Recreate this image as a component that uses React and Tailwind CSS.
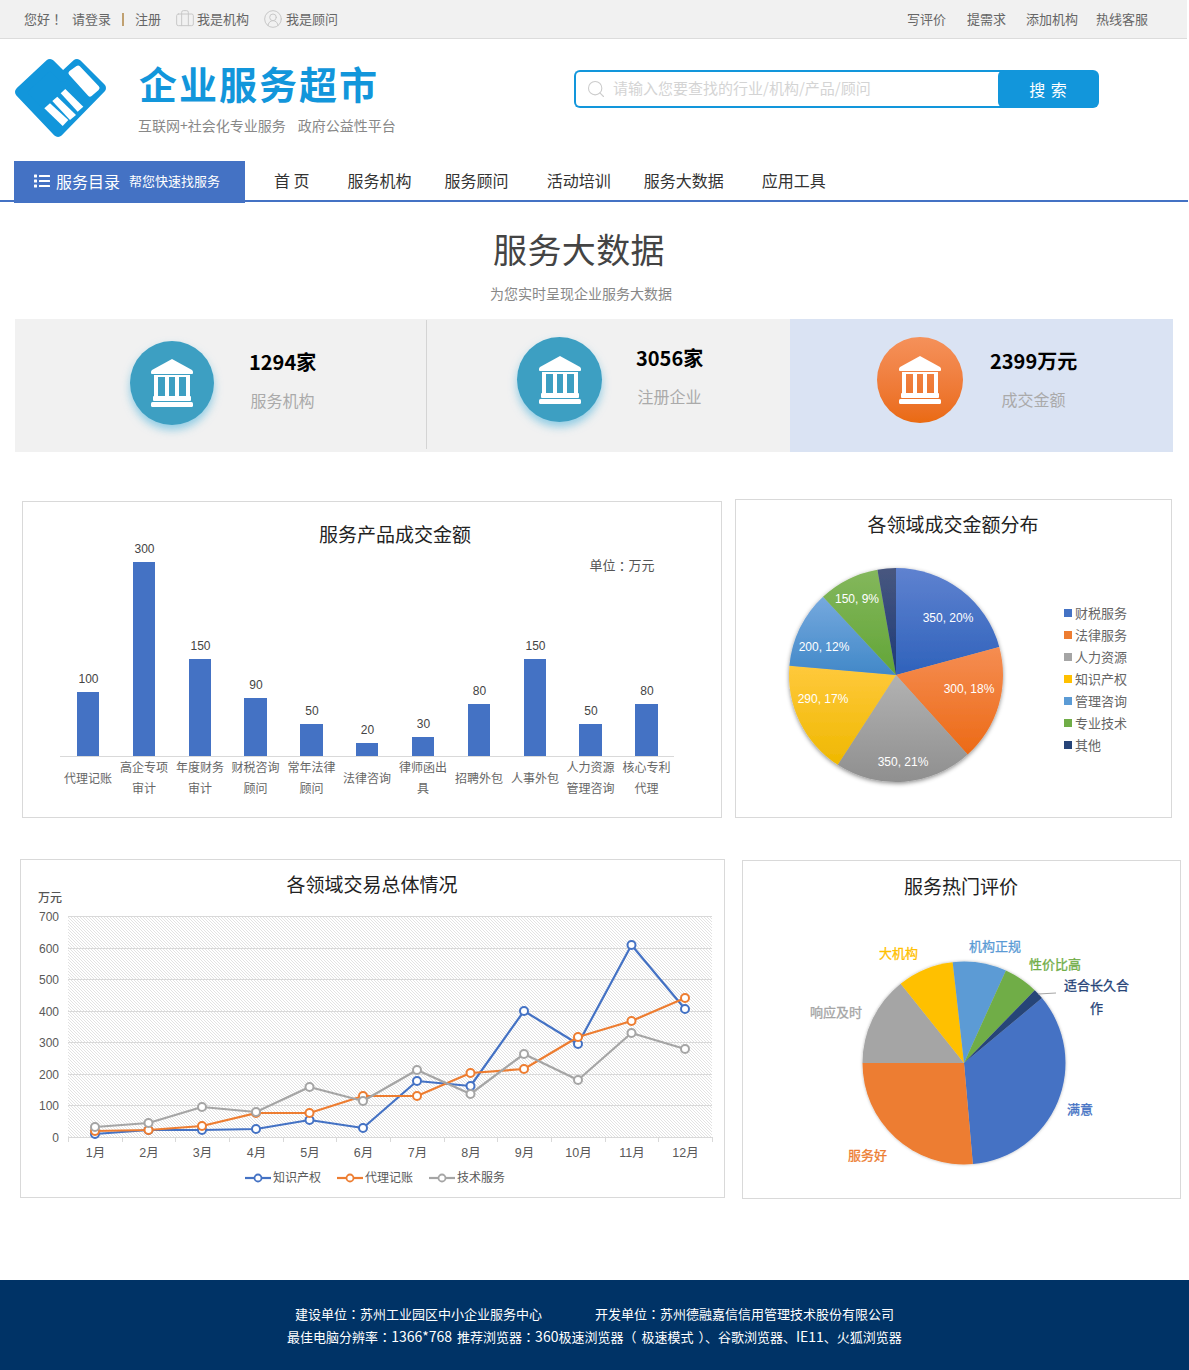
import React from 'react';
import { Briefcase, CircleUserRound, Search } from 'lucide-react';
import { FaList } from 'react-icons/fa';

const CHART_FONT = "font-['Liberation_Sans','Noto_Sans_CJK_SC',sans-serif]";

const navItems = [
  { label: '首 页', cls: 'ml-[29px]' },
  { label: '服务机构', cls: 'ml-[38px]' },
  { label: '服务顾问', cls: 'ml-[33px]' },
  { label: '活动培训', cls: 'ml-[38px]' },
  { label: '服务大数据', cls: 'ml-[33px]' },
  { label: '应用工具', cls: 'ml-[38px]' },
];

const bars = [
  { name: ['代理记账'], value: 100, x: 77, w: 22, top: 692 },
  { name: ['高企专项', '审计'], value: 300, x: 133, w: 22, top: 562 },
  { name: ['年度财务', '审计'], value: 150, x: 189, w: 22, top: 659 },
  { name: ['财税咨询', '顾问'], value: 90, x: 244, w: 23, top: 698 },
  { name: ['常年法律', '顾问'], value: 50, x: 300, w: 23, top: 724 },
  { name: ['法律咨询'], value: 20, x: 356, w: 22, top: 743 },
  { name: ['律师函出', '具'], value: 30, x: 412, w: 22, top: 737 },
  { name: ['招聘外包'], value: 80, x: 468, w: 22, top: 704 },
  { name: ['人事外包'], value: 150, x: 524, w: 22, top: 659 },
  { name: ['人力资源', '管理咨询'], value: 50, x: 579, w: 23, top: 724 },
  { name: ['核心专利', '代理'], value: 80, x: 635, w: 23, top: 704 },
];

const fieldSlices = [
  { name: '财税服务', from: 0, to: 74.8, c1: '#5f82d0', c2: '#2f62bb', legend: '#4472c4' },
  { name: '法律服务', from: 74.8, to: 138, c1: '#f58d52', c2: '#ec6a16', legend: '#ed7d31' },
  { name: '人力资源', from: 138, to: 213, c1: '#b2b2b2', c2: '#8f8f8f', legend: '#a5a5a5' },
  { name: '知识产权', from: 213, to: 275, c1: '#ffc93c', c2: '#efb800', legend: '#ffc000' },
  { name: '管理咨询', from: 275, to: 317, c1: '#76a9de', c2: '#4188c8', legend: '#5b9bd5' },
  { name: '专业技术', from: 317, to: 350, c1: '#84b75c', c2: '#62a537', legend: '#70ad47' },
  { name: '其他', from: 350, to: 360, c1: '#48577f', c2: '#1d3a78', legend: '#264478' },
];

const fieldLabels = [
  { t: '350, 20%', x: 948, y: 618 },
  { t: '300, 18%', x: 969, y: 689 },
  { t: '350, 21%', x: 903, y: 762 },
  { t: '290, 17%', x: 823, y: 699 },
  { t: '200, 12%', x: 824, y: 647 },
  { t: '150, 9%', x: 857, y: 599 },
];

const months = ['1月', '2月', '3月', '4月', '5月', '6月', '7月', '8月', '9月', '10月', '11月', '12月'];
const monthX = [95, 148.5, 202, 256, 309.5, 363, 417, 470.5, 524, 578, 631.5, 685];

const series = [
  { name: '知识产权', color: '#4472c4', lx: 245, ys: [1134, 1130, 1130, 1129, 1120, 1128, 1081, 1086, 1011, 1044, 945, 1009] },
  { name: '代理记账', color: '#ed7d31', lx: 337, ys: [1131, 1130, 1126, 1113, 1113, 1096, 1096, 1073, 1069, 1037, 1021, 998] },
  { name: '技术服务', color: '#a5a5a5', lx: 429, ys: [1127, 1123, 1107, 1112, 1087, 1101, 1070, 1094, 1054, 1080, 1033, 1049] },
];

const hotSlices = [
  { from: 50.2, to: 175, color: '#4472c4' },
  { from: 175, to: 270, color: '#ed7d31' },
  { from: 270, to: 321.4, color: '#a5a5a5' },
  { from: 321.4, to: 353.6, color: '#ffc000' },
  { from: 353.6, to: 384.4, color: '#5b9bd5' },
  { from: 24.4, to: 44.2, color: '#70ad47' },
  { from: 44.2, to: 50.2, color: '#264478' },
];

const hotLabels = [
  { t: '大机构', x: 879, y: 953, color: '#ffc000' },
  { t: '机构正规', x: 969, y: 946, color: '#5b9bd5' },
  { t: '性价比高', x: 1029, y: 964, color: '#70ad47' },
  { t: '适合长久合', x: 1064, y: 985, color: '#264478' },
  { t: '作', x: 1090, y: 1008, color: '#264478' },
  { t: '响应及时', x: 810, y: 1012, color: '#a5a5a5' },
  { t: '满意', x: 1067, y: 1109, color: '#4472c4' },
  { t: '服务好', x: 848, y: 1155, color: '#ed7d31' },
];

// pie wedge, angles in degrees clockwise from 12 o'clock
const wedge = (cx, cy, r, from, to) => {
  const p = (a) => {
    const rad = ((a - 90) * Math.PI) / 180;
    return `${(cx + r * Math.cos(rad)).toFixed(2)} ${(cy + r * Math.sin(rad)).toFixed(2)}`;
  };
  return `M${cx} ${cy} L${p(from)} A${r} ${r} 0 ${to - from > 180 ? 1 : 0} 1 ${p(to)} Z`;
};

// the TC face centres full-width punctuation the way the original font does
const Punct = ({ children }) => <span className="font-['Noto_Sans_CJK_TC',sans-serif]">{children}</span>;

const Logo = () => (
  <svg width="92" height="80" viewBox="15 58 92 80" className="shrink-0">
    <polygon
      points="20,92 50,64 63,77 77,64 101,88 58,132"
      fill="#1296db"
      stroke="#1296db"
      strokeWidth="10"
      strokeLinejoin="round"
    />
    <polygon
      points="71,73 78,68 97,88 90,94"
      fill="#fff"
      stroke="#fff"
      strokeWidth="5"
      strokeLinejoin="round"
    />
    <polygon points="44.3,108.3 50,103.3 68.3,120 62.7,126" fill="#fff" />
    <polygon points="52.3,101 57.3,96.7 76,115 70,120" fill="#fff" />
    <polygon points="60.7,93.3 65.3,89 83.3,106.7 77.7,111.7" fill="#fff" />
  </svg>
);

const BankIcon = () => (
  <svg width="42" height="48" viewBox="0 0 42 48" fill="#fff">
    <path d="M21 0 L41 11 Q42 12 42 13 L42 14 Q42 15 41 15 L1 15 Q0 15 0 14 L0 13 Q0 12 1 11 Z" />
    <rect x="3" y="16" width="36" height="2" />
    <rect x="3" y="18" width="4" height="20" />
    <rect x="14" y="18" width="4" height="20" />
    <rect x="24" y="18" width="4" height="20" />
    <rect x="35" y="18" width="4" height="20" />
    <rect x="2" y="37" width="38" height="5" rx="1" />
    <rect x="0" y="43" width="42" height="5" rx="1.5" />
  </svg>
);

const Stat = ({ value, label, circle, textCls }) => (
  <div className="flex items-start">
    <div className={`rounded-full flex items-center justify-center shrink-0 ${circle}`}>
      <BankIcon />
    </div>
    <div className={`text-center ${textCls}`}>
      <div className="mt-[9px] text-[20px] leading-[24px] font-bold text-black whitespace-nowrap">{value}</div>
      <div className="mt-[14px] text-[16px] leading-[24px] text-[#aaaaaa]">{label}</div>
    </div>
  </div>
);

const BarPanel = () => (
  <div className="w-[700px] h-[317px] border border-[#d9d9d9]">
    <svg width="698" height="315" viewBox="23 502 698 315" className={CHART_FONT}>
      <text x="395" y="535" textAnchor="middle" dominantBaseline="central" fontSize="19" fill="#222">服务产品成交金额</text>
      <text x="622" y="565" textAnchor="middle" dominantBaseline="central" fontSize="13" fill="#555">
        单位<tspan className="font-['Noto_Sans_CJK_TC',sans-serif]">：</tspan>万元
      </text>
      {bars.map((b) => {
        const cx = b.x + b.w / 2;
        return (
          <g key={b.x}>
            <rect x={b.x} y={b.top} width={b.w} height={756 - b.top} fill="#4472c4" />
            <text x={cx + 0.5} y={b.top - 13} textAnchor="middle" dominantBaseline="central" fontSize="12" fill="#444">{b.value}</text>
            {b.name.length === 1 ? (
              <text x={cx} y={779} textAnchor="middle" dominantBaseline="central" fontSize="12" fill="#666">{b.name[0]}</text>
            ) : (
              <>
                <text x={cx} y={768} textAnchor="middle" dominantBaseline="central" fontSize="12" fill="#666">{b.name[0]}</text>
                <text x={cx} y={789} textAnchor="middle" dominantBaseline="central" fontSize="12" fill="#666">{b.name[1]}</text>
              </>
            )}
          </g>
        );
      })}
      <rect x="60" y="756" width="614" height="1" fill="#d9d9d9" />
    </svg>
  </div>
);

const FieldPiePanel = () => (
  <div className="ml-[13px] w-[437px] h-[319px] border border-[#d9d9d9]">
    <svg width="435" height="317" viewBox="736 500 435 317" className={CHART_FONT}>
      <defs>
        <filter id="pieShadow" x="-10%" y="-10%" width="120%" height="120%">
          <feDropShadow dx="0" dy="1.5" stdDeviation="2" floodColor="#000" floodOpacity="0.45" />
        </filter>
        {fieldSlices.map((s, i) => (
          <linearGradient key={s.name} id={`field${i}`} x1="0" y1="0" x2="0" y2="1">
            <stop offset="0" stopColor={s.c1} />
            <stop offset="1" stopColor={s.c2} />
          </linearGradient>
        ))}
      </defs>
      <text x="953" y="525" textAnchor="middle" dominantBaseline="central" fontSize="19" fill="#222">各领域成交金额分布</text>
      <g filter="url(#pieShadow)">
        {fieldSlices.map((s, i) => (
          <path key={s.name} d={wedge(896, 675, 107, s.from, s.to)} fill={`url(#field${i})`} />
        ))}
      </g>
      {fieldLabels.map((l) => (
        <text key={l.t} x={l.x} y={l.y} textAnchor="middle" dominantBaseline="central" fontSize="12" fill="#fff">{l.t}</text>
      ))}
      {fieldSlices.map((s, i) => (
        <g key={s.name}>
          <rect x="1064" y={609 + i * 22} width="8" height="8" fill={s.legend} />
          <text x="1075" y={613 + i * 22} dominantBaseline="central" fontSize="13" fill="#666">{s.name}</text>
        </g>
      ))}
    </svg>
  </div>
);

const LinePanel = () => (
  <div className="w-[705px] h-[339px] border border-[#d9d9d9]">
    <svg width="703" height="337" viewBox="21 860 703 337" className={CHART_FONT}>
      <defs>
        <pattern id="hatch" width="3" height="3" patternUnits="userSpaceOnUse">
          <path d="M-1 -1 L4 4 M2 -1 L4 1 M-1 2 L1 4" stroke="#d6d6d6" strokeWidth="0.7" />
        </pattern>
      </defs>
      <text x="372" y="885" textAnchor="middle" dominantBaseline="central" fontSize="19" fill="#222">各领域交易总体情况</text>
      <text x="38" y="898" dominantBaseline="central" fontSize="12" fontWeight="500" fill="#555">万元</text>
      <rect x="68" y="916" width="644" height="221" fill="url(#hatch)" />
      {[0, 1, 2, 3, 4, 5, 6, 7].map((n) => (
        <g key={n}>
          <rect x="68" y={Math.round(1137 - n * 31.57)} width="644" height="1" fill="#d9d9d9" />
          <text x="59" y={1137.5 - n * 31.5} textAnchor="end" dominantBaseline="central" fontSize="12" fill="#595959">{n * 100}</text>
        </g>
      ))}
      {[0, 1, 2, 3, 4, 5, 6, 7, 8, 9, 10, 11, 12].map((n) => (
        <rect key={n} x={Math.round(68 + n * 53.67)} y="1137" width="1" height="5" fill="#d9d9d9" />
      ))}
      {months.map((m, i) => (
        <text key={m} x={monthX[i] + 0.5} y="1153" textAnchor="middle" dominantBaseline="central" fontSize="12.5" fill="#595959">{m}</text>
      ))}
      {series.map((s) => (
        <g key={s.name}>
          <polyline points={s.ys.map((y, i) => `${monthX[i]},${y}`).join(' ')} fill="none" stroke={s.color} strokeWidth="2.2" strokeLinejoin="round" />
          {s.ys.map((y, i) => (
            <circle key={i} cx={monthX[i]} cy={y} r="4" fill="#fff" stroke={s.color} strokeWidth="2" />
          ))}
          <line x1={s.lx} y1="1178" x2={s.lx + 26} y2="1178" stroke={s.color} strokeWidth="2.2" />
          <circle cx={s.lx + 13} cy="1178" r="3.5" fill="#fff" stroke={s.color} strokeWidth="1.8" />
          <text x={s.lx + 28} y="1178" dominantBaseline="central" fontSize="12" fill="#595959">{s.name}</text>
        </g>
      ))}
    </svg>
  </div>
);

const HotPiePanel = () => (
  <div className="ml-[17px] mt-px w-[439px] h-[339px] border border-[#d9d9d9]">
    <svg width="437" height="337" viewBox="743 861 437 337" className={CHART_FONT}>
      <defs>
        <filter id="hotShadow" x="-10%" y="-10%" width="120%" height="120%">
          <feDropShadow dx="0" dy="0" stdDeviation="1.5" floodColor="#000" floodOpacity="0.3" />
        </filter>
      </defs>
      <text x="961" y="887" textAnchor="middle" dominantBaseline="central" fontSize="19" fill="#222">服务热门评价</text>
      <g filter="url(#hotShadow)">
        {hotSlices.map((s) => (
          <path key={s.from} d={wedge(964, 1063, 101.5, s.from, s.to)} fill={s.color} />
        ))}
      </g>
      <line x1="1038" y1="994" x2="1056" y2="993" stroke="#a5a5a5" strokeWidth="1" />
      {hotLabels.map((l) => (
        <text key={l.t} x={l.x} y={l.y} dominantBaseline="central" fontSize="13" stroke={l.color} strokeWidth="0.3" fill={l.color}>{l.t}</text>
      ))}
    </svg>
  </div>
);

const App = () => {
  return (
    <div className="w-[1189px] h-[1370px] overflow-hidden bg-white font-['Noto_Sans_CJK_SC',sans-serif] text-[13px]">
      {/* top bar */}
      <div className="w-[1187px] h-[39px] bg-[#f1f1f1] border-b border-[#dcdcdc] flex items-center justify-between pl-[24px] pr-[39px] text-[#666666]">
        <div className="flex items-center">
          <span>您好<Punct>！</Punct></span>
          <span className="ml-[9px]">请登录</span>
          <span className="ml-[11px] w-[2px] h-[13px] bg-[#c0a070]"></span>
          <span className="ml-[11px]">注册</span>
          <Briefcase size={20} strokeWidth={1.2} className="ml-[14px] text-[#c8c8c8]" />
          <span className="ml-[2px]">我是机构</span>
          <CircleUserRound size={20} strokeWidth={1.2} className="ml-[14px] text-[#c8c8c8]" />
          <span className="ml-[3px]">我是顾问</span>
        </div>
        <div className="flex items-center">
          <span>写评价</span>
          <span className="ml-[21px]">提需求</span>
          <span className="ml-[20px]">添加机构</span>
          <span className="ml-[18px]">热线客服</span>
        </div>
      </div>

      {/* logo and search */}
      <div className="h-[122px] flex items-start pl-[15px]">
        <div className="mt-[19px]">
          <Logo />
        </div>
        <div className="ml-[32px] w-[435px]">
          <div className="mt-[24px] text-[38px] leading-[40px] font-bold tracking-[2px] text-[#1296db]">企业服务超市</div>
          <div className="mt-[12px] -ml-px text-[14px] leading-[20px] text-[#888888]">
            互联网+社会化专业服务<span className="ml-[12px]">政府公益性平台</span>
          </div>
        </div>
        <div className="mt-[31px] flex h-[38px]">
          <div className="w-[430px] border-y-2 border-l-2 border-[#1296db] rounded-l-md flex items-center pl-[10px] pb-[2px]">
            <Search size={20} strokeWidth={1.3} className="text-[#cccccc] mt-[2px]" />
            <span className="ml-[7px] text-[15px] text-[#d4d4d4]">请输入您要查找的行业/机构/产品/顾问</span>
          </div>
          <div className="-ml-[6px] w-[101px] bg-[#1296db] rounded-md flex items-center justify-center text-[16px] tracking-[1px] text-white">搜 索</div>
        </div>
      </div>

      {/* nav */}
      <div className="w-[1188px] h-[41px] border-b-2 border-[#4472c4] flex items-start pl-[14px] text-[16px] text-[#333333]">
        <div className="w-[231px] h-[42px] shrink-0 bg-[#4472c4] flex items-center pl-[20px] pb-[3px] text-white">
          <FaList size={16} />
          <span className="ml-[6px]">服务目录</span>
          <span className="ml-[9px] text-[13px]">帮您快速找服务</span>
        </div>
        {navItems.map((item) => (
          <div key={item.label} className={`h-[37px] flex items-center whitespace-nowrap ${item.cls}`}>{item.label}</div>
        ))}
      </div>

      {/* heading */}
      <h2 className="mt-[22px] ml-[-31px] text-center text-[34px] tracking-[0.4px] leading-[50px] text-[#444444]">服务大数据</h2>
      <p className="mt-[9px] ml-[-27px] text-center text-[14px] leading-[20px] text-[#888888]">为您实时呈现企业服务大数据</p>

      {/* stats */}
      <div className="mt-[16px] ml-[15px] w-[1158px] h-[133px] flex">
        <div className="w-[411px] bg-[#f1f1f1] pl-[115px] pt-[22px]">
          <Stat
            value="1294家"
            label="服务机构"
            circle="w-[84px] h-[84px] bg-[#3d9fc2] shadow-[0_5px_8px_rgba(80,180,220,0.6)]"
            textCls="ml-[35px]"
          />
        </div>
        <div className="w-[364px] bg-[#f1f1f1] relative pl-[91px] pt-[18px]">
          <div className="absolute left-0 top-px bottom-[3px] w-px bg-[#d4d4d4]"></div>
          <Stat
            value="3056家"
            label="注册企业"
            circle="w-[85px] h-[85px] bg-[#3d9fc2] shadow-[0_5px_8px_rgba(80,180,220,0.6)]"
            textCls="ml-[34px]"
          />
        </div>
        <div className="w-[383px] bg-[#dae3f3] pl-[87px] pt-[18px]">
          <Stat
            value="2399万元"
            label="成交金额"
            circle="w-[86px] h-[86px] bg-linear-to-b from-[#f5915a] to-[#ea6a10]"
            textCls="ml-[27px] pt-[3px]"
          />
        </div>
      </div>

      {/* charts */}
      <div className="mt-[47px] ml-[22px] flex items-end">
        <BarPanel />
        <FieldPiePanel />
      </div>
      <div className="mt-[41px] ml-[20px] flex items-start">
        <LinePanel />
        <HotPiePanel />
      </div>

      {/* footer */}
      <div className="mt-[81px] h-[90px] bg-[#003366] flex flex-col items-center pt-[22px] text-white leading-[23px]">
        <div>
          建设单位<Punct>：</Punct>苏州工业园区中小企业服务中心
          <span className="ml-[53px]">开发单位<Punct>：</Punct>苏州德融嘉信信用管理技术股份有限公司</span>
        </div>
        <div className="whitespace-nowrap">
          最佳电脑分辨率<Punct>：</Punct><span className="text-[14px]">1366*768</span>
          <span className="ml-[5px]">推荐浏览器</span><Punct>：</Punct><span className="text-[14px]">360</span>极速浏览器（<span className="ml-[5px] mr-[5px]">极速模式</span>）、谷歌浏览器、<span className="text-[14px]">IE11</span>、火狐浏览器
        </div>
      </div>
    </div>
  );
};

export default App;
